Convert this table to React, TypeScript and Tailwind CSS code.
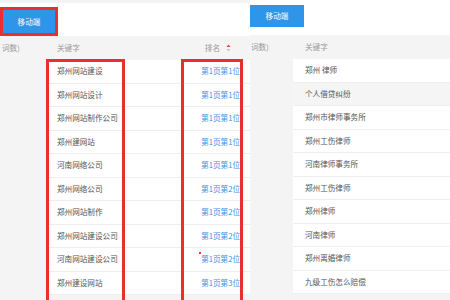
import React from "react";

const leftRows = [
  { kw: "郑州网站建设", rank: "第1页第1位" },
  { kw: "郑州网站设计", rank: "第1页第1位" },
  { kw: "郑州网站制作公司", rank: "第1页第1位" },
  { kw: "郑州建网站", rank: "第1页第1位" },
  { kw: "河南网络公司", rank: "第1页第1位" },
  { kw: "郑州网络公司", rank: "第1页第2位" },
  { kw: "郑州网站制作", rank: "第1页第2位" },
  { kw: "郑州网站建设公司", rank: "第1页第2位" },
  { kw: "河南网站建设公司", rank: "第1页第2位", dot: true },
  { kw: "郑州建设网站", rank: "第1页第3位" },
];

const rightRows = [
  "郑州 律师",
  "个人借贷纠纷",
  "郑州市律师事务所",
  "郑州工伤律师",
  "河南律师事务所",
  "郑州工伤律师",
  "郑州律师",
  "河南律师",
  "郑州离婚律师",
  "九级工伤怎么赔偿",
];

function SortIcon() {
  return (
    <svg width="5" height="8" viewBox="0 0 5 8" className="ml-[6px]">
      <path d="M2.5 0.5 L4.5 3 L0.5 3 Z" fill="#e8443f" />
      <path d="M0.5 5 L4.5 5 L2.5 7.5 Z" fill="#c8c8c8" />
    </svg>
  );
}

export default function App() {
  return (
    <div
      className="flex w-[450px] h-[300px] overflow-hidden bg-white text-[7.6px] leading-none text-[#555]"
      style={{ fontFamily: '"Noto Sans CJK SC", "Noto Sans", sans-serif' }}
    >
      {/* left screenshot */}
      <div className="relative w-[250px] shrink-0 bg-[#f4f4f4]">
        <div className="h-[36px] pt-[10px] pl-[2px] bg-white border-t-[3px] border-[#f3f3f3]">
          <div className="flex h-[23px] w-[54px] items-center justify-center bg-[#2e95e8] text-white -mt-[3px]">
            移动端
          </div>
        </div>
        <div className="flex h-[24px] items-center bg-[#f4f4f4] text-[#999]">
          <div className="w-[57px] pl-[2px]">词数)</div>
          <div className="flex-1">关键字</div>
          <div className="flex items-center pr-[19px]">
            排名
            <SortIcon />
          </div>
        </div>
        <div className="flex">
          <div className="w-[48px] shrink-0" />
          <div className="flex-1 bg-white">
            {leftRows.map((r, i) => (
              <div
                key={i}
                className="flex h-[23.5px] items-center justify-between border-b border-[#eeeeee] pl-[9px] pr-[10px]"
              >
                <span>{r.kw}</span>
                <span className="relative text-[#3b8fe3]">
                  {r.dot && (
                    <span className="absolute -left-[2px] -top-[3px] h-[2px] w-[2px] bg-[#e33]" />
                  )}
                  {r.rank}
                </span>
              </div>
            ))}
          </div>
        </div>

        {/* highlight boxes */}
        <div className="absolute left-0 top-[7px] h-[29px] w-[58px] border-[3px] border-[#e8302c]" />
        <div className="absolute left-[46px] top-[59px] h-[260px] w-[79px] border-[3px] border-[#e8302c]" />
        <div className="absolute left-[181px] top-[59px] h-[260px] w-[62px] border-[3px] border-[#e8302c]" />
      </div>

      {/* right screenshot */}
      <div className="w-[200px] shrink-0 bg-[#f4f4f4]">
        <div className="h-[35px] pt-[5px] bg-white">
          <div className="flex h-[22px] w-[54px] items-center justify-center bg-[#2e95e8] text-white">
            移动端
          </div>
        </div>
        <div className="flex h-[24px] items-center text-[#999]">
          <div className="w-[55px] pl-[1px]">词数)</div>
          <div>关键字</div>
        </div>
        <div className="flex">
          <div className="w-[43px] shrink-0" />
          <div className="flex-1 bg-white">
            {rightRows.map((kw, i) => (
              <div
                key={i}
                className={`flex h-[23.5px] items-center border-b border-[#eeeeee] pl-[12px] ${
                  i === 1 ? "bg-[#f5f5f5]" : ""
                }`}
              >
                {kw}
              </div>
            ))}
          </div>
        </div>
      </div>
    </div>
  );
}
